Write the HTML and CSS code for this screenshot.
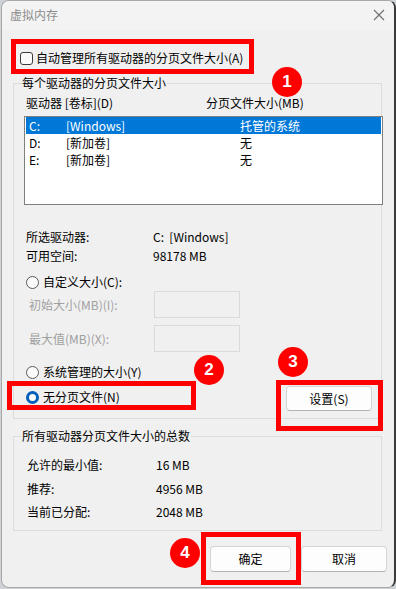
FILE: index.html
```html
<!DOCTYPE html>
<html lang="zh-CN">

<head>
    <meta charset="UTF-8" />
    <title>虚拟内存</title>
    <link rel="stylesheet" href="styles.css">
</head>

<body>
    <div class="window">
        <div class="titlebar">
            <span class="title">虚拟内存</span>
            <svg class="close" width="12" height="12" viewBox="0 0 12 12">
                <path d="M1 1 L11 11 M11 1 L1 11" stroke="#6e6e6e" stroke-width="1.1" fill="none" />
            </svg>
        </div>

        <div class="check-row">
            <span class="checkbox"></span>
            <span>自动管理所有驱动器的分页文件大小(A)</span>
        </div>

        <fieldset class="group group-drives">
            <legend>每个驱动器的分页文件大小</legend>
            <div class="group-body">
                <div class="list-head">
                    <span class="head-drive">驱动器 [卷标](D)</span>
                    <span>分页文件大小(MB)</span>
                </div>
                <div class="listbox">
                    <div class="list-row selected"><span class="c1">C:</span><span class="c2">[Windows]</span><span>托管的系统</span></div>
                    <div class="list-row"><span class="c1">D:</span><span class="c2">[新加卷]</span><span>无</span></div>
                    <div class="list-row"><span class="c1">E:</span><span class="c2">[新加卷]</span><span>无</span></div>
                </div>

                <div class="info">
                    <div class="info-row"><span class="info-label">所选驱动器:</span><span>C:&nbsp;&nbsp;[Windows]</span></div>
                    <div class="info-row"><span class="info-label">可用空间:</span><span>98178 MB</span></div>
                </div>

                <div class="radio-row custom">
                    <span class="radio"></span>
                    <span>自定义大小(C):</span>
                </div>
                <div class="field-row first">
                    <span class="field-label">初始大小(MB)(I):</span>
                    <span class="textbox"></span>
                </div>
                <div class="field-row">
                    <span class="field-label">最大值(MB)(X):</span>
                    <span class="textbox"></span>
                </div>

                <div class="options">
                    <div class="option-list">
                        <div class="radio-row">
                            <span class="radio"></span>
                            <span>系统管理的大小(Y)</span>
                        </div>
                        <div class="radio-row second">
                            <span class="radio checked"></span>
                            <span>无分页文件(N)</span>
                        </div>
                    </div>
                    <button class="btn btn-set">设置(S)</button>
                </div>
            </div>
        </fieldset>

        <fieldset class="group group-total">
            <legend>所有驱动器分页文件大小的总数</legend>
            <div class="group-body totals">
                <div class="total-row"><span class="total-label">允许的最小值:</span><span>16 MB</span></div>
                <div class="total-row"><span class="total-label">推荐:</span><span>4956 MB</span></div>
                <div class="total-row"><span class="total-label">当前已分配:</span><span>2048 MB</span></div>
            </div>
        </fieldset>

        <div class="actions">
            <button class="btn btn-ok">确定</button>
            <button class="btn btn-cancel">取消</button>
        </div>

        <!-- annotations -->
        <div class="mark mark-1"></div>
        <div class="mark mark-2"></div>
        <div class="mark mark-3"></div>
        <div class="mark mark-4"></div>
        <span class="badge badge-1">1</span>
        <span class="badge badge-2">2</span>
        <span class="badge badge-3">3</span>
        <span class="badge badge-4">4</span>
    </div>
</body>

</html>
```

FILE: styles.css
```css
:root {
    --dialog-bg: #f0f0f0;
    --title-bg: #f3f3f3;
    --group-line: #dcdcdc;
    --text: #000;
    --disabled: #a0a0a0;
    --select: #0078d7;
    --radio-on: #005fb8;
    --mark: #ff0000;
}

body {
    margin: 0;
    padding-left: 1px;
    background: #cfd2d6;
    font-family: "Noto Sans CJK SC", "Microsoft YaHei", sans-serif;
    font-size: 12px;
    line-height: 16px;
    color: var(--text);
}

.window {
    position: relative;
    box-sizing: border-box;
    width: 395px;
    height: 588px;
    background: var(--dialog-bg);
    border: 1px solid #a8a8a8;
    border-right: 2px solid #3a3a3a;
    border-radius: 8px;
    overflow: hidden;
}

.titlebar {
    height: 29px;
    background: var(--title-bg);
    display: flex;
    align-items: center;
    justify-content: space-between;
    padding: 0 8px 2px 8px;
    box-sizing: border-box;
}

.title {
    color: #8c8c8c;
}

.close {
    margin-right: 1px;
}

.check-row {
    display: flex;
    align-items: center;
    height: 16px;
    margin-top: 20px;
    padding-left: 18px;
}

.checkbox {
    box-sizing: border-box;
    width: 13px;
    height: 13px;
    border: 1px solid #3c3c3c;
    border-radius: 3px;
    background: #fbfbfb;
    margin-right: 3px;
}

/* group boxes */
.group {
    box-sizing: border-box;
    width: 369px;
    margin: 9px 0 0 11px;
    padding: 0;
    border: 1px solid var(--group-line);
    min-width: 0;
}

.group legend {
    margin-left: 8px;
    padding: 0 1px 0 0;
    line-height: 16px;
}

.group-body {
    padding: 4px 0 7px 12px;
}

.list-head {
    display: flex;
}

.head-drive {
    width: 180px;
}

.listbox {
    box-sizing: border-box;
    width: 359px;
    height: 89px;
    margin: 5px 0 0 -2px;
    padding: 0 1px;
    background: #fff;
    border: 1px solid #7f7f7f;
}

.list-row {
    display: flex;
    height: 17px;
    line-height: 17px;
    padding-left: 3px;
}

.list-row.selected {
    background: var(--select);
    color: #fff;
}

.c1 {
    width: 37px;
}

.c2 {
    width: 174px;
}

.info {
    margin-top: 22px;
}

.info-row {
    display: flex;
    line-height: 19px;
}

.info-label {
    width: 127px;
}

.radio-row {
    display: flex;
    align-items: center;
    height: 16px;
}

.radio-row.custom {
    margin-top: 9px;
}

.radio-row.second {
    margin-top: 9px;
}

.radio {
    box-sizing: border-box;
    width: 13px;
    height: 13px;
    border: 1px solid #5a5a5a;
    border-radius: 50%;
    background: #fbfbfb;
    margin-right: 4px;
}

.radio.checked {
    border: 3.5px solid var(--radio-on);
    background: #fff;
}

.field-row {
    display: flex;
    align-items: center;
    margin-top: 7px;
    color: var(--disabled);
}

.field-row.first {
    margin-top: 1px;
}

.field-label {
    width: 125px;
    padding-left: 3px;
}

.textbox {
    box-sizing: border-box;
    width: 86px;
    height: 27px;
    border: 1px solid #dadada;
    background: var(--dialog-bg);
}

.options {
    display: flex;
    justify-content: space-between;
    align-items: flex-start;
    margin-top: 12px;
    padding-right: 9px;
}

/* buttons */
.btn {
    box-sizing: border-box;
    height: 26px;
    font-family: inherit;
    font-size: 12px;
    color: var(--text);
    background: #fdfdfd;
    border: 1px solid #d4d4d4;
    border-bottom-color: #b4b4b4;
    border-radius: 4px;
    padding: 0;
}

.btn-set {
    width: 86px;
    height: 25px;
    margin-top: 22px;
}

.totals {
    padding: 0 0 6px 13px;
}

.total-row {
    display: flex;
    line-height: 23.5px;
}

.total-row:first-child {
    margin-top: 9px;
}

.total-label {
    width: 129px;
}

.actions {
    display: flex;
    justify-content: flex-end;
    gap: 10px;
    margin-top: 15px;
    padding-right: 7px;
}

.btn-ok {
    width: 81px;
}

.btn-cancel {
    width: 86px;
}

/* red annotation boxes and numbers */
.mark {
    position: absolute;
    box-sizing: border-box;
    border: 5px solid var(--mark);
}

.mark-1 { left: 9px; top: 38px; width: 243px; height: 35px; }
.mark-2 { left: 5px; top: 380px; width: 189px; height: 29px; }
.mark-3 { left: 274px; top: 379px; width: 107px; height: 51px; }
.mark-4 { left: 199px; top: 531px; width: 100px; height: 53px; }

.badge {
    position: absolute;
    width: 30px;
    height: 30px;
    border-radius: 50%;
    background: var(--mark);
    color: #fff;
    font-family: "Liberation Sans", Arial, sans-serif;
    font-weight: bold;
    font-size: 17px;
    line-height: 30px;
    text-align: center;
}

.badge-1 { left: 270px; top: 66px; }
.badge-2 { left: 192px; top: 354px; }
.badge-3 { left: 276px; top: 346px; }
.badge-4 { left: 168px; top: 537px; }
```
